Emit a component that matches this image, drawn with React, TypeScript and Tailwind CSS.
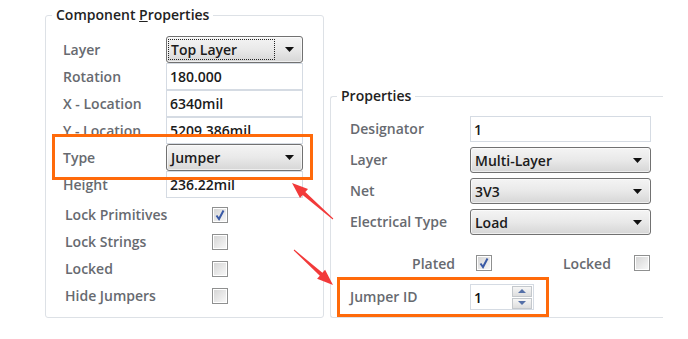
import React from "react";

const font = { fontFamily: '"Open Sans", "Noto Sans", sans-serif' };

function Label({ children }: { children: React.ReactNode }) {
  return <span className="text-[14px] leading-[18px] font-semibold text-[#676a70]">{children}</span>;
}

function TextBox({ value }: { value: string }) {
  return (
    <div className="flex h-full w-full items-center border border-[#d5dbe3] bg-white pl-[3px] text-[14px] font-semibold text-[#1b1b1b]">
      {value}
    </div>
  );
}

function Arrow() {
  return (
    <svg width="9" height="5" viewBox="0 0 9 5" className="shrink-0">
      <polygon points="0,0 9,0 4.5,5" fill="#111" />
    </svg>
  );
}

function Combo({ value, focus }: { value: string; focus?: boolean }) {
  return (
    <div className="flex h-full w-full items-center rounded-[3px] border border-[#717171] bg-linear-to-b from-[#f4f4f4] via-[#e9e9e9] to-[#d6d6d6] pr-[8px] pl-[1px] text-[14px] font-semibold text-[#1b1b1b] shadow-[inset_0_0_0_1px_rgba(255,255,255,0.6)]">
      {focus ? (
        <span className="mr-[10px] flex h-[21px] flex-1 items-center border border-dotted border-[#222] pl-[2px]">{value}</span>
      ) : (
        <span className="flex-1 pl-[3px]">{value}</span>
      )}
      <Arrow />
    </div>
  );
}

function Check({ checked }: { checked?: boolean }) {
  return (
    <div className="flex h-[16px] w-[16px] items-center justify-center border border-[#8f9090] bg-white p-[1px]">
      <div className="relative h-full w-full bg-linear-to-br from-[#d6d6d6] to-[#f7f7f7]">
        {checked && (
          <svg width="12" height="12" viewBox="0 0 12 12" className="absolute top-0 left-0">
            <path d="M2.5 6.5 L5 10 L9.5 1.5" fill="none" stroke="#3a5aa6" strokeWidth="2" />
          </svg>
        )}
      </div>
    </div>
  );
}

function Spin({ value }: { value: string }) {
  return (
    <div className="flex h-[26px] w-[64px] items-center border border-[#d5dbe3] bg-white pr-[1px] pl-[3px] text-[14px] font-semibold text-[#111]">
      <span className="flex-1">{value}</span>
      <div className="flex flex-col gap-[1px]">
        {["M1 7 L5 3 L9 7 Z", "M1 3 L5 7 L9 3 Z"].map((d) => (
          <div key={d} className="flex h-[11px] w-[20px] items-center justify-center border border-[#c4c8cc] bg-linear-to-b from-[#f6f6f6] to-[#dedede]">
            <svg width="10" height="10" viewBox="0 0 10 10">
              <path d={d} fill="#5570a8" />
            </svg>
          </div>
        ))}
      </div>
    </div>
  );
}

const leftRows: [string, React.ReactNode][] = [
  ["Layer", <Combo value="Top Layer" focus />],
  ["Rotation", <TextBox value="180.000" />],
  ["X - Location", <TextBox value="6340mil" />],
  ["Y - Location", <TextBox value="5209.386mil" />],
  ["Type", <Combo value="Jumper" />],
  ["Height", <TextBox value="236.22mil" />],
];

const leftChecks: [string, boolean][] = [
  ["Lock Primitives", true],
  ["Lock Strings", false],
  ["Locked", false],
  ["Hide Jumpers", false],
];

const rightRows: [string, React.ReactNode][] = [
  ["Designator", <TextBox value="1" />],
  ["Layer", <Combo value="Multi-Layer" />],
  ["Net", <Combo value="3V3" />],
  ["Electrical Type", <Combo value="Load" />],
];

export default function App() {
  return (
    <div className="relative flex h-[339px] w-[688px] overflow-hidden bg-white" style={font}>
      {/* Component Properties */}
      <div className="relative mt-[15px] ml-[45px] h-[303px] w-[279px] rounded-[3px] border border-[#dde1e6] pt-[20px] pl-[17px]">
        <span className="absolute -top-[10px] left-[6px] bg-white px-[4px] text-[14px] leading-[18px] font-semibold text-[#222]">
          Component <span className="underline">P</span>roperties
        </span>
        <div className="flex flex-col">
          {leftRows.map(([label, ctrl]) => (
            <div key={label} className="grid h-[27px] grid-cols-[103px_137px] items-center">
              <Label>{label}</Label>
              <div className="h-full">{ctrl}</div>
            </div>
          ))}
        </div>
        <div className="mt-[3px] flex flex-col">
          {leftChecks.map(([label, on]) => (
            <div key={label} className="grid h-[27px] grid-cols-[149px_16px] items-center">
              <Label>
                <span className="pl-[2px]">{label}</span>
              </Label>
              <Check checked={on} />
            </div>
          ))}
        </div>
      </div>

      {/* Properties */}
      <div className="relative mt-[96px] ml-[6px] h-[222px] w-[333px] rounded-l-[3px] border-y border-l border-[#dde1e6] pt-[19px] pl-[19px]">
        <span className="absolute -top-[10px] left-[6px] bg-white px-[4px] text-[14px] leading-[18px] font-semibold text-[#222]">
          Properties
        </span>
        <div className="flex flex-col gap-[5px]">
          {rightRows.map(([label, ctrl]) => (
            <div key={label} className="grid h-[26px] grid-cols-[120px_181px] items-center">
              <Label>{label}</Label>
              <div className="h-full">{ctrl}</div>
            </div>
          ))}
        </div>
        <div className="mt-[15px] flex h-[26px] items-center">
          <div className="w-[120px] pr-[15px] text-right">
            <Label>Plated</Label>
          </div>
          <div className="ml-[6px]">
            <Check checked />
          </div>
          <div className="ml-[71px] w-[71px]">
            <Label>Locked</Label>
          </div>
          <Check />
        </div>
        <div className="mt-[8px] grid h-[26px] grid-cols-[120px_64px] items-center">
          <Label>Jumper ID</Label>
          <Spin value="1" />
        </div>
      </div>

      {/* annotation boxes */}
      <div className="absolute top-[134px] left-[52px] h-[46px] w-[261px] border-[3px] border-[#ff6a0a]" />
      <div className="absolute top-[277px] left-[337px] h-[40px] w-[212px] border-[3px] border-[#ff6a0a]" />

      {/* annotation arrows */}
      <svg className="pointer-events-none absolute inset-0" width="688" height="339" viewBox="0 0 688 339">
        <polygon
          points="333.3,218.6 305.3,192 308,189 292,183 300,198 302.7,195 332.7,219.4"
          fill="#f23a3a"
        />
        <polygon
          points="293.7,250.4 319.8,275.8 317.1,278.8 333,285 325.1,269.8 322.4,272.8 294.3,249.6"
          fill="#f23a3a"
        />
      </svg>
    </div>
  );
}
